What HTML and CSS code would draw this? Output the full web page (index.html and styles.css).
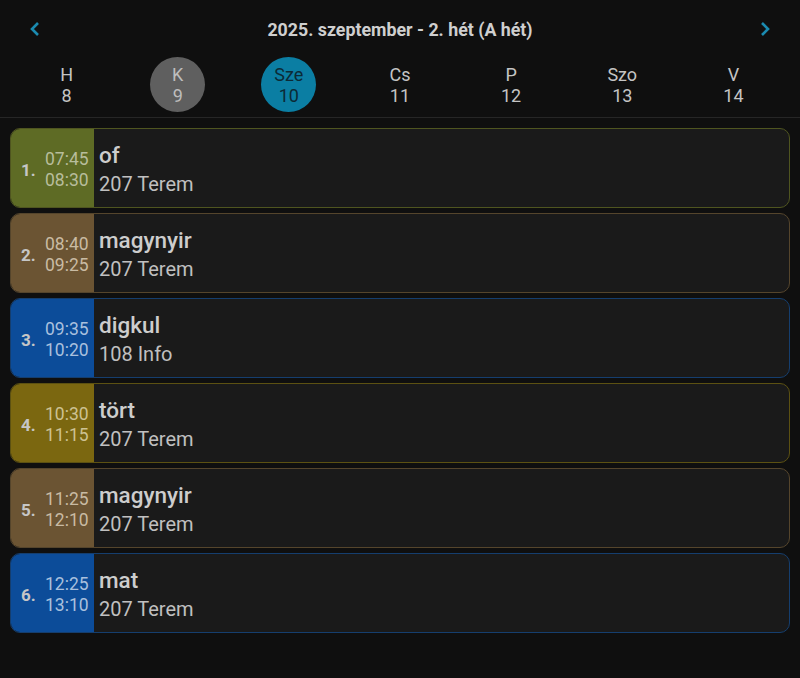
FILE: index.html
```html
<!DOCTYPE html>
<html lang="hu">
<head>
  <meta charset="UTF-8">
  <title>Órarend</title>
  <meta name="viewport" content="width=device-width, initial-scale=1.0">
  <link rel="stylesheet" href="styles.css">
</head>
<body>
  <div class="fejlec">
    <button class="nyil">
      <svg width="14" height="16" viewBox="0 0 14 16"><path d="M9 2 L3 8 L9 14" fill="none" stroke="#1b8bb0" stroke-width="2.6"/></svg>
    </button>
    <h2>2025. szeptember - 2. hét (A hét)</h2>
    <button class="nyil">
      <svg width="14" height="16" viewBox="0 0 14 16"><path d="M5 2 L11 8 L5 14" fill="none" stroke="#1b8bb0" stroke-width="2.6"/></svg>
    </button>
  </div>

  <div class="napok">
    <div class="nap"><span>H</span><span>8</span></div>
    <div class="nap ma"><span>K</span><span>9</span></div>
    <div class="nap kijelolt"><span>Sze</span><span>10</span></div>
    <div class="nap"><span>Cs</span><span>11</span></div>
    <div class="nap"><span>P</span><span>12</span></div>
    <div class="nap"><span>Szo</span><span>13</span></div>
    <div class="nap"><span>V</span><span>14</span></div>
  </div>

  <ul class="orak">
    <li class="ora zold">
      <div class="szin"><b>1.</b><div class="ido"><span>07:45</span><span>08:30</span></div></div>
      <div class="adat"><div class="targy">of</div><div class="terem">207 Terem</div></div>
    </li>
    <li class="ora barna">
      <div class="szin"><b>2.</b><div class="ido"><span>08:40</span><span>09:25</span></div></div>
      <div class="adat"><div class="targy">magynyir</div><div class="terem">207 Terem</div></div>
    </li>
    <li class="ora kek">
      <div class="szin"><b>3.</b><div class="ido"><span>09:35</span><span>10:20</span></div></div>
      <div class="adat"><div class="targy">digkul</div><div class="terem">108 Info</div></div>
    </li>
    <li class="ora mustar">
      <div class="szin"><b>4.</b><div class="ido"><span>10:30</span><span>11:15</span></div></div>
      <div class="adat"><div class="targy">tört</div><div class="terem">207 Terem</div></div>
    </li>
    <li class="ora barna">
      <div class="szin"><b>5.</b><div class="ido"><span>11:25</span><span>12:10</span></div></div>
      <div class="adat"><div class="targy">magynyir</div><div class="terem">207 Terem</div></div>
    </li>
    <li class="ora kek">
      <div class="szin"><b>6.</b><div class="ido"><span>12:25</span><span>13:10</span></div></div>
      <div class="adat"><div class="targy">mat</div><div class="terem">207 Terem</div></div>
    </li>
  </ul>
</body>
</html>
```

FILE: styles.css
```css
body {
  margin: 0;
  font-family: Roboto, "Noto Sans", sans-serif;
  background-color: #0f0f0f;
  color: #c9c9c9;
}
.fejlec {
  display: flex;
  align-items: center;
  justify-content: space-between;
  height: 58px;
  padding: 0 24px;
}
.fejlec h2 {
  margin: 0;
  font-size: 17.8px;
  font-weight: 700;
  color: #cfcfcf;
}
.nyil {
  background: none;
  border: none;
  padding: 0;
  width: 24px;
  height: 24px;
  display: flex;
  align-items: center;
  justify-content: center;
}
.napok {
  display: grid;
  grid-template-columns: repeat(7, 1fr);
  padding: 0 11px;
  height: 59px;
  border-bottom: 1px solid #262626;
}
.nap {
  display: flex;
  flex-direction: column;
  align-items: center;
  justify-content: center;
  justify-self: center;
  width: 55px;
  height: 55px;
  margin-top: -1px;
  border-radius: 50%;
  font-size: 18px;
  line-height: 21px;
  color: #c4c4c4;
}
.nap.ma {
  background-color: #5f5f5f;
  color: #bdbdbd;
}
.nap.kijelolt {
  background-color: #0b7ea3;
  color: #0c2a36;
}
.orak {
  list-style: none;
  margin: 10px 0 0;
  padding: 0 10px;
  display: flex;
  flex-direction: column;
  gap: 5px;
}
.ora {
  display: flex;
  height: 78px;
  border: 1px solid;
  border-radius: 10px;
  overflow: hidden;
  background-color: #1a1a1a;
}
.szin {
  width: 83px;
  display: flex;
  align-items: center;
  padding-left: 10px;
  box-sizing: border-box;
}
.szin b {
  font-size: 17px;
  width: 24px;
  margin-top: 3px;
  color: #c6c6c6;
}
.ido {
  display: flex;
  flex-direction: column;
  font-size: 17.5px;
  line-height: 21px;
  margin-top: 3px;
}
.adat {
  padding-left: 5px;
  display: flex;
  flex-direction: column;
  justify-content: center;
  padding-top: 3px;
}
.targy {
  font-size: 22.5px;
  font-weight: 500;
  line-height: 29px;
  color: #cdcdcd;
}
.terem {
  font-size: 20px;
  line-height: 28px;
  color: #c0c0c0;
}
.zold { border-color: #4f5520; }
.zold .szin { background-color: #5e6b25; }
.zold .ido { color: #b8bd9c; }
.barna { border-color: #55452c; }
.barna .szin { background-color: #6b5433; }
.barna .ido { color: #c9bba3; }
.kek { border-color: #153e6e; }
.kek .szin { background-color: #0c4c99; }
.kek .ido { color: #a9c0de; }
.mustar { border-color: #5c5112; }
.mustar .szin { background-color: #7b6710; }
.mustar .ido { color: #cdc293; }
```
